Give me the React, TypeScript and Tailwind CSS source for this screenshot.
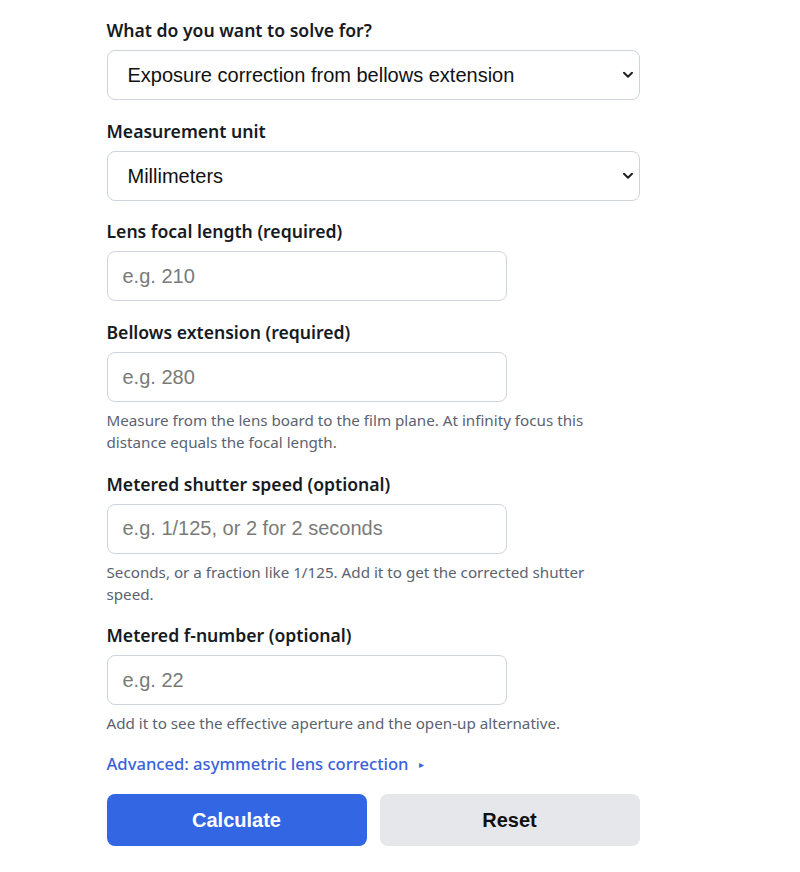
import { useState } from 'react'

const fieldBox =
  "h-[50px] rounded-[8px] border border-[#cfd4dc] bg-white font-['Liberation_Sans',Arial,sans-serif] text-[20px] text-[#111] outline-none placeholder:text-[#7a7a7a] focus:border-[#3366e0]"

function Label({ children, htmlFor }: { children: React.ReactNode; htmlFor: string }) {
  return (
    <label htmlFor={htmlFor} className="mb-[7px] block text-[17.6px] font-semibold leading-[26px] text-[#161a22]">
      {children}
    </label>
  )
}

function Help({ children }: { children: React.ReactNode }) {
  return <p className="mt-[7px] max-w-[500px] text-[15.2px] leading-[22px] text-[#5b6271]">{children}</p>
}

function Select({
  id,
  value,
  onChange,
  options,
}: {
  id: string
  value: string
  onChange: (v: string) => void
  options: [string, string][]
}) {
  return (
    <div className="relative">
      <select
        id={id}
        value={value}
        onChange={(e) => onChange(e.target.value)}
        className={`${fieldBox} w-full appearance-none pl-[20px] pr-[36px]`}
      >
        {options.map(([v, label]) => (
          <option key={v} value={v}>
            {label}
          </option>
        ))}
      </select>
      {/* chevron */}
      <svg
        className="pointer-events-none absolute right-[7px] top-1/2 -translate-y-1/2"
        width="10"
        height="7"
        viewBox="0 0 10 7"
        fill="none"
      >
        <path d="M1 1.2 5 5.2 9 1.2" stroke="#222" strokeWidth="2" strokeLinecap="round" strokeLinejoin="round" />
      </svg>
    </div>
  )
}

export default function App() {
  const [mode, setMode] = useState('bellows')
  const [unit, setUnit] = useState('mm')
  const [focal, setFocal] = useState('')
  const [bellows, setBellows] = useState('')
  const [shutter, setShutter] = useState('')
  const [fnum, setFnum] = useState('')
  const [advanced, setAdvanced] = useState(false)

  const reset = () => {
    setFocal('')
    setBellows('')
    setShutter('')
    setFnum('')
  }

  return (
    <div className="min-h-screen bg-white font-['Noto_Sans',sans-serif]">
      <form
        className="mx-auto flex w-[533px] -translate-x-[27px] flex-col gap-[17.7px] pt-[17px] pb-[26px]"
        onSubmit={(e) => e.preventDefault()}
      >
        <div>
          <Label htmlFor="mode">What do you want to solve for?</Label>
          <Select
            id="mode"
            value={mode}
            onChange={setMode}
            options={[
              ['bellows', 'Exposure correction from bellows extension'],
              ['extension', 'Bellows extension from magnification'],
            ]}
          />
        </div>

        <div>
          <Label htmlFor="unit">Measurement unit</Label>
          <Select
            id="unit"
            value={unit}
            onChange={setUnit}
            options={[
              ['mm', 'Millimeters'],
              ['in', 'Inches'],
            ]}
          />
        </div>

        <div>
          <Label htmlFor="focal">Lens focal length (required)</Label>
          <input id="focal" value={focal} onChange={(e) => setFocal(e.target.value)} placeholder="e.g. 210" className={`${fieldBox} w-[400px] px-[15px]`} />
        </div>

        <div>
          <Label htmlFor="bellows">Bellows extension (required)</Label>
          <input id="bellows" value={bellows} onChange={(e) => setBellows(e.target.value)} placeholder="e.g. 280" className={`${fieldBox} w-[400px] px-[15px]`} />
          <Help>
            Measure from the lens board to the film plane. At infinity focus this distance equals the focal length.
          </Help>
        </div>

        <div>
          <Label htmlFor="shutter">Metered shutter speed (optional)</Label>
          <input
            id="shutter"
            value={shutter}
            onChange={(e) => setShutter(e.target.value)}
            placeholder="e.g. 1/125, or 2 for 2 seconds"
            className={`${fieldBox} w-[400px] px-[15px]`}
          />
          <Help>Seconds, or a fraction like 1/125. Add it to get the corrected shutter speed.</Help>
        </div>

        <div>
          <Label htmlFor="fnum">Metered f-number (optional)</Label>
          <input id="fnum" value={fnum} onChange={(e) => setFnum(e.target.value)} placeholder="e.g. 22" className={`${fieldBox} w-[400px] px-[15px]`} />
          <Help>Add it to see the effective aperture and the open-up alternative.</Help>
        </div>

        <button
          type="button"
          onClick={() => setAdvanced((v) => !v)}
          className="flex h-[24px] items-center gap-[10px] self-start text-[16.6px] font-medium text-[#3a62dc]"
        >
          Advanced: asymmetric lens correction
          <span className="text-[10px]">{advanced ? '▾' : '▸'}</span>
        </button>

        <div className="flex gap-[13px]">
          <button
            type="submit"
            className="h-[52px] flex-1 rounded-[8px] bg-[#3366e3] font-['Liberation_Sans',Arial,sans-serif] text-[20px] font-bold text-white"
          >
            Calculate
          </button>
          <button
            type="button"
            onClick={reset}
            className="h-[52px] flex-1 rounded-[8px] bg-[#e5e7eb] font-['Liberation_Sans',Arial,sans-serif] text-[20px] font-bold text-[#111]"
          >
            Reset
          </button>
        </div>
      </form>
    </div>
  )
}
